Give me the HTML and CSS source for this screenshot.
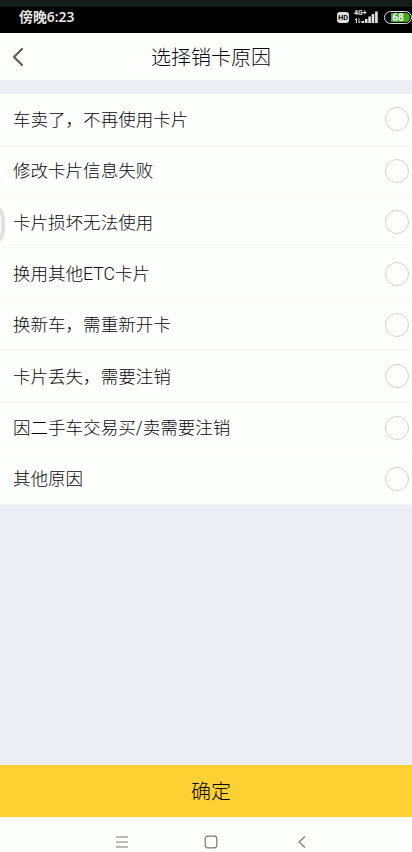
FILE: index.html
```html
<!DOCTYPE html>
<html lang="zh-CN">
<head>
<meta charset="utf-8">
<meta name="viewport" content="width=device-width, initial-scale=1">
<title>选择销卡原因</title>
<link rel="stylesheet" href="styles.css">
</head>
<body>
<div class="screen">
  <div class="status">
    <span class="time">傍晚6:23</span>
    <div class="indicators">
      <span class="hd">HD</span>
      <div class="network">
        <span class="generation">4G+</span>
        <svg class="signal" width="25" height="14" viewBox="0 0 25 14">
          <path d="M2.500 13V8.500M1 10l1.500-1.500M5 8.500V13l1.500-1.500" stroke="#ddd" stroke-width="1" fill="none"/>
          <path d="M7.500 11h2.600v2H7.500zM10.900 9h2.600v4h-2.600zM14.300 6.500h2.600v6.500h-2.600zM17.700 4h2.600v9h-2.600zM21.100 1.500h2.600v11.500h-2.600z" fill="#e4e4e4"/>
        </svg>
      </div>
      <div class="battery"><span class="charge">68</span></div>
    </div>
  </div>
  <header class="header">
    <svg class="back" width="12" height="20" viewBox="0 0 12 20"><path d="M10 2L2 10l8 8" fill="none" stroke="#606060" stroke-width="2.300" stroke-linecap="round" stroke-linejoin="round"/></svg>
    <h1 class="title">选择销卡原因</h1>
  </header>
  <main class="content">
    <ul class="reasons">
      <li class="reason"><span>车卖了，不再使用卡片</span><i class="radio"></i></li>
      <li class="reason"><span>修改卡片信息失败</span><i class="radio"></i></li>
      <li class="reason"><span>卡片损坏无法使用</span><i class="radio"></i></li>
      <li class="reason"><span>换用其他ETC卡片</span><i class="radio"></i></li>
      <li class="reason"><span>换新车，需重新开卡</span><i class="radio"></i></li>
      <li class="reason"><span>卡片丢失，需要注销</span><i class="radio"></i></li>
      <li class="reason"><span>因二手车交易买/卖需要注销</span><i class="radio"></i></li>
      <li class="reason"><span>其他原因</span><i class="radio"></i></li>
    </ul>
  </main>
  <button class="confirm">确定</button>
  <nav class="nav">
    <svg width="14" height="14" viewBox="0 0 14 14"><path d="M1 2h12M1 7h12M1 12h12" stroke="#777" stroke-width="1.100"/></svg>
    <svg width="14" height="14" viewBox="0 0 14 14"><rect x="1.200" y="1.200" width="11.600" height="11.600" rx="2.500" fill="none" stroke="#777" stroke-width="1.200"/></svg>
    <svg width="14" height="14" viewBox="0 0 14 14"><path d="M12 1.500L6 7l6 5.500" fill="none" stroke="#777" stroke-width="1.200"/></svg>
  </nav>
  <div class="edge-handle"></div>
</div>
</body>
</html>
```
FILE: styles.css
```css
* { box-sizing: border-box; }
body {
  margin: 0;
  background: #fdfffd;
  font-family: "Noto Sans CJK SC", sans-serif;
  font-weight: 300;
  color: #080808;
}
.screen {
  position: relative;
  display: flex;
  flex-direction: column;
  width: 412px;
  height: 852px;
  overflow: hidden;
}
.status {
  display: flex;
  align-items: center;
  justify-content: space-between;
  height: 33px;
  padding: 3px 0 0 19px;
  border-top: 7px solid #141c18;
  background: #000;
  color: #e4e4e4;
}
.time {
  font-family: "Noto Sans", "Noto Sans CJK SC", sans-serif;
  font-size: 13.9px;
  font-weight: 600;
  line-height: 20px;
  margin-top: -9px;
}
.indicators {
  display: flex;
  align-items: center;
  margin-top: -9px;
}
.hd {
  width: 12px;
  height: 11px;
  margin-right: 5px;
  border-radius: 3px;
  background: #e0e0e0;
  color: #111;
  font: 700 7.5px/11px Roboto, sans-serif;
  text-align: center;
}
.network {
  position: relative;
  width: 25px;
  height: 14px;
  margin-right: 5px;
}
.signal { display: block; }
.generation {
  position: absolute;
  top: 0;
  left: 0;
  font: 700 7px/7px Roboto, sans-serif;
}
.battery {
  width: 28px;
  height: 13px;
  padding: 1px;
  border: 1.5px solid #e0e0e0;
  border-radius: 7px;
}
.charge {
  display: block;
  height: 9px;
  border-radius: 4.5px;
  background: linear-gradient(to right, #000 20%, #43ad20 20%);
  color: #fff;
  font: 700 10px/9px Roboto, sans-serif;
  text-align: center;
}
.header {
  display: grid;
  grid-template-columns: 60px 1fr 50px;
  align-items: center;
  height: 48px;
  border-bottom: 1px solid #e8e9eb;
}
.back { margin-left: 12px; }
.title {
  margin: 0;
  font-size: 20px;
  font-weight: 300;
  line-height: 30px;
  text-align: center;
}
.content {
  height: 684px;
  padding-top: 13.3px;
  background: #edeef3;
}
.reasons {
  margin: 0;
  padding: 0;
  list-style: none;
}
.reason {
  display: flex;
  align-items: center;
  justify-content: space-between;
  height: 51.35px;
  padding: 1px 3px 0 13px;
  border-bottom: 1px solid #f5f6f5;
  background: #fdfffd;
  font-family: Roboto, "Noto Sans CJK SC", sans-serif;
  font-size: 17.55px;
  line-height: 26px;
}
.radio {
  width: 24px;
  height: 24px;
  margin-top: -1px;
  border: 1px solid #d0d2d0;
  border-radius: 50%;
}
.confirm {
  flex: none;
  height: 52px;
  padding: 0 0 0 10px;
  border: 0;
  background: #ffd133;
  color: #080808;
  font: 300 20px/52px "Noto Sans CJK SC", sans-serif;
}
.nav {
  display: flex;
  flex: none;
  align-items: center;
  gap: 75px;
  height: 35px;
  padding: 15px 0 0 115px;
}
.edge-handle {
  position: absolute;
  top: 205px;
  left: -15px;
  width: 20px;
  height: 39px;
  border: 4px solid #dfe1df;
  border-radius: 10px / 15px;
}
```
